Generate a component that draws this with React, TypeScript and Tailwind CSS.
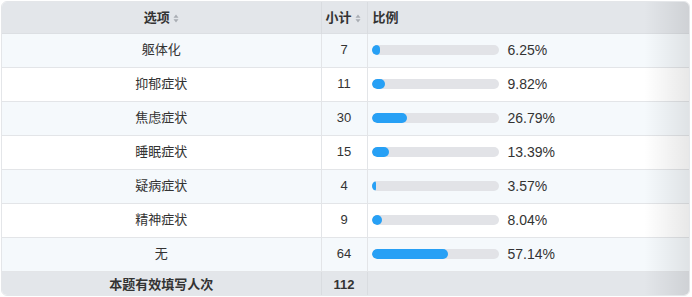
import React from "react";

const rows = [
  { name: "躯体化", n: 7, p: 6.25 },
  { name: "抑郁症状", n: 11, p: 9.82 },
  { name: "焦虑症状", n: 30, p: 26.79 },
  { name: "睡眠症状", n: 15, p: 13.39 },
  { name: "疑病症状", n: 4, p: 3.57 },
  { name: "精神症状", n: 9, p: 8.04 },
  { name: "无", n: 64, p: 57.14 },
];

function Sort() {
  return (
    <svg width="6" height="9" viewBox="0 0 6 9" className="inline-block ml-[3px] align-middle">
      <path d="M3 0.5 L5.5 3.8 L0.5 3.8 Z" fill="#a9adb3" />
      <path d="M3 8.5 L5.5 5.2 L0.5 5.2 Z" fill="#a9adb3" />
    </svg>
  );
}

export default function App() {
  return (
    <div className="w-[692px] h-[297px] bg-white p-[1px] pr-[2px]" style={{ fontFamily: '"Helvetica Neue", "Liberation Sans", "Noto Sans CJK SC", sans-serif' }}>
      <div className="relative w-[689px] h-[295px] rounded-[6px] overflow-hidden border border-[#e4e6e9] text-[13px] text-[#333]">
        <table className="w-full border-collapse table-fixed">
          <colgroup>
            <col className="w-[319px]" />
            <col className="w-[46px]" />
            <col />
          </colgroup>
          <thead>
            <tr className="bg-[#e3e6ea] h-[31px] border-b border-[#dcdfe3]">
              <th className="font-bold text-center border-r border-[#d9dce0]">选项<Sort /></th>
              <th className="font-bold text-left pl-[4px] border-r border-[#d9dce0]">小计<Sort /></th>
              <th className="font-bold text-left pl-[5px]">比例</th>
            </tr>
          </thead>
          <tbody>
            {rows.map((r, i) => (
              <tr key={r.name} className={`h-[34px] border-b border-[#e3e5e8] ${i % 2 === 0 ? "bg-[#f5f9fc]" : "bg-white"}`}>
                <td className="text-center border-r border-[#e3e5e8]">{r.name}</td>
                <td className="text-center border-r border-[#e3e5e8]">{r.n}</td>
                <td className="pl-[4px]">
                  <div className="flex items-center">
                    <div className="w-[127px] h-[10px] rounded-full bg-[#e2e3e7] overflow-hidden">
                      <div className="h-full rounded-full bg-[#27a0f5]" style={{ width: `${Math.max(r.p * 1.34, 4)}px` }} />
                    </div>
                    <span className="ml-[9px] text-[14px]">{r.p.toFixed(2)}%</span>
                  </div>
                </td>
              </tr>
            ))}
            <tr className="h-[26px] bg-[#e3e6ea]">
              <td className="text-center font-bold border-r border-[#d9dce0]">本题有效填写人次</td>
              <td className="text-center font-bold border-r border-[#d9dce0]">112</td>
              <td></td>
            </tr>
          </tbody>
        </table>
        <div className="pointer-events-none absolute top-0 right-0 h-full w-[45px] bg-gradient-to-r from-transparent to-[rgba(0,0,0,0.09)]" />
      </div>
    </div>
  );
}
